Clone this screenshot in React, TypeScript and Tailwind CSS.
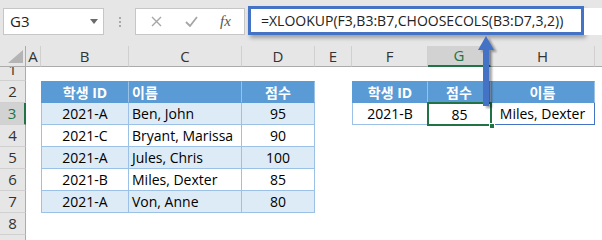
import React from "react";

const ROWS1 = [
  ["2021-A", "Ben, John", "95"],
  ["2021-C", "Bryant, Marissa", "90"],
  ["2021-A", "Jules, Chris", "100"],
  ["2021-B", "Miles, Dexter", "85"],
  ["2021-A", "Von, Anne", "80"],
];

function TopBar() {
  return (
    <div className="flex h-[46px] items-start bg-[#e6e6e6]">
      <div className="ml-[3px] mt-[8px] flex h-[27px] w-[101px] items-center justify-between border border-[#c6c6c6] bg-white pl-[6px] pr-[5px] text-[15px] text-[#222]">
        <span>G3</span>
        <svg width="8" height="5" viewBox="0 0 8 5">
          <path d="M0 0 L8 0 L4 5 Z" fill="#6b6b6b" />
        </svg>
      </div>
      <div className="ml-[15px] mt-[17px] flex flex-col gap-[2px]">
        <div className="h-[2px] w-[2px] bg-[#a8a8a8]" />
        <div className="h-[2px] w-[2px] bg-[#a8a8a8]" />
        <div className="h-[2px] w-[2px] bg-[#a8a8a8]" />
      </div>
      <div className="ml-[14px] mt-[8px] flex h-[27px] w-[110px] items-center border border-[#c6c6c6] bg-white pl-[15px]">
        <svg width="11" height="11" viewBox="0 0 11 11">
          <path d="M1 1 L10 10 M10 1 L1 10" stroke="#a6a6a6" strokeWidth="1.4" />
        </svg>
        <svg className="ml-[23px]" width="13" height="11" viewBox="0 0 13 11">
          <path d="M1 6 L5 10 L12 1" stroke="#a6a6a6" strokeWidth="1.8" fill="none" />
        </svg>
        <span className="ml-[22px] font-['Liberation_Serif',serif] text-[15px] italic leading-none text-[#555]">
          fx
        </span>
      </div>
      <div className="ml-[3px] mt-[6px] flex h-[29px] w-[336px] items-center whitespace-nowrap border-[3px] border-[#4472c4] bg-white pl-[10px] text-[14px] text-[#222] shadow-[2px_3px_4px_rgba(0,0,0,0.3)]">
        =XLOOKUP(F3,B3:B7,CHOOSECOLS(B3:D7,3,2))
      </div>
      <div className="mt-[8px] h-[27px] flex-1 bg-white" />
    </div>
  );
}

const colHdr =
  "flex items-center justify-center border-b border-r border-b-[#ababab] border-r-[#d0d0d0] bg-[#e6e6e6] text-[15px] text-[#333]";
const colHdrSel =
  "flex items-center justify-center border-b-2 border-r border-b-[#217346] border-r-[#d0d0d0] bg-[#d2d2d2] text-[15px] text-[#217346]";
const rowHdr =
  "flex items-center justify-center overflow-hidden border-b border-r border-b-[#d0d0d0] border-r-[#ababab] bg-[#e6e6e6] text-[15px] text-[#333]";
const rowHdrSel =
  "flex items-center justify-center overflow-hidden border-b border-r-2 border-b-[#d0d0d0] border-r-[#217346] bg-[#d2d2d2] text-[15px] text-[#217346]";

const hdrL =
  "flex items-center justify-center border-y border-l border-r border-y-[#5b9bd5] border-l-[#5b9bd5] border-r-[#9bc2e6] bg-[#5b9bd5] font-bold text-white";
const hdrC =
  "flex items-center justify-center border-y border-r border-y-[#5b9bd5] border-r-[#9bc2e6] bg-[#5b9bd5] font-bold text-white";
const hdrLeftText =
  "flex items-center justify-start border-y border-r border-y-[#5b9bd5] border-r-[#9bc2e6] bg-[#5b9bd5] pl-[3px] font-bold text-white";

function Sheet() {
  return (
    <div className="grid grid-cols-[26px_15px_88px_113px_73px_37px_76px_63px_104px_7px] grid-rows-[21px_14px_repeat(8,22px)] text-[14px] text-black">
      {/* column header row */}
      <div className="relative border-b border-r border-[#ababab] bg-[#e6e6e6]">
        <svg className="absolute left-[8px] top-[4px]" width="15" height="13" viewBox="0 0 15 13">
          <path d="M15 0 L15 13 L0 13 Z" fill="#b4b4b4" />
        </svg>
      </div>
      <div className={colHdr}>A</div>
      <div className={colHdr}>B</div>
      <div className={colHdr}>C</div>
      <div className={colHdr}>D</div>
      <div className={colHdr}>E</div>
      <div className={colHdr}>F</div>
      <div className={colHdrSel}>G</div>
      <div className={colHdr}>H</div>
      <div className="border-b border-b-[#ababab] bg-[#e6e6e6]" />

      {/* row 1 (partially visible) */}
      <div className="flex items-end justify-center overflow-hidden border-b border-r border-b-[#d0d0d0] border-r-[#ababab] bg-[#e6e6e6] text-[15px] text-[#333]">
        <div className="flex h-[22px] shrink-0 items-center">1</div>
      </div>
      <div className="col-span-9" />

      {/* row 2 */}
      <div className={rowHdr}>2</div>
      <div />
      <div className={hdrL}>학생 ID</div>
      <div className={hdrLeftText}>이름</div>
      <div className={hdrC}>점수</div>
      <div />
      <div className={hdrL}>학생 ID</div>
      <div className={hdrC}>점수</div>
      <div className={hdrC}>이름</div>
      <div />

      {/* rows 3-7 */}
      {ROWS1.map((r, i) => {
        const band = i % 2 === 0;
        const n = i + 3;
        return (
          <React.Fragment key={n}>
            <div className={n === 3 ? rowHdrSel : rowHdr}>{n}</div>
            <div />
            <div
              className={
                band
                  ? "flex items-center justify-center border-b border-l border-r border-[#9bc2e6] bg-[#ddebf7]"
                  : "flex items-center justify-center border-b border-l border-r border-[#9bc2e6] bg-white"
              }
            >
              {r[0]}
            </div>
            <div
              className={
                band
                  ? "flex items-center border-b border-r border-[#9bc2e6] bg-[#ddebf7] pl-[3px]"
                  : "flex items-center border-b border-r border-[#9bc2e6] bg-white pl-[3px]"
              }
            >
              {r[1]}
            </div>
            <div
              className={
                band
                  ? "flex items-center justify-center border-b border-r border-[#9bc2e6] bg-[#ddebf7]"
                  : "flex items-center justify-center border-b border-r border-[#9bc2e6] bg-white"
              }
            >
              {r[2]}
            </div>
            <div />
            {n === 3 ? (
              <>
                <div className="flex items-center justify-center border-b border-l border-r border-[#9bc2e6] bg-white">
                  2021-B
                </div>
                <div className="relative flex items-center justify-center bg-white">
                  85
                  <div className="absolute -bottom-[1px] -left-[1px] -right-[1px] -top-[1px] border-2 border-[#217346]" />
                  <div className="absolute -bottom-[4px] -right-[4px] h-[6px] w-[6px] border border-white bg-[#217346]" />
                </div>
                <div className="flex items-center justify-center border-b border-r border-[#4472c4] bg-white">
                  Miles, Dexter
                </div>
                <div />
              </>
            ) : (
              <>
                <div />
                <div />
                <div />
                <div />
              </>
            )}
          </React.Fragment>
        );
      })}

      {/* rows 8-9 */}
      <div className={rowHdr}>8</div>
      <div className="col-span-9" />
      <div className="border-b border-r border-b-[#d0d0d0] border-r-[#ababab] bg-[#e6e6e6]" />
      <div className="col-span-9" />
    </div>
  );
}

function Arrow() {
  const d = "M486 36 L494 50 L489 50 L489 106 L483 106 L483 50 L478 50 Z";
  return (
    <svg className="pointer-events-none absolute left-0 top-0" width="602" height="240" viewBox="0 0 602 240">
      <defs>
        <filter id="arrowShadow" x="-50%" y="-50%" width="200%" height="200%">
          <feGaussianBlur stdDeviation="1.3" />
        </filter>
      </defs>
      <path d={d} fill="#000" opacity="0.35" transform="translate(3 2)" filter="url(#arrowShadow)" />
      <path d={d} fill="#4472c4" />
    </svg>
  );
}

export default function App() {
  return (
    <div className="relative h-[240px] w-[602px] overflow-hidden bg-white font-['Open_Sans','Noto_Sans_CJK_KR',sans-serif]">
      <TopBar />
      <Sheet />
      <Arrow />
    </div>
  );
}
